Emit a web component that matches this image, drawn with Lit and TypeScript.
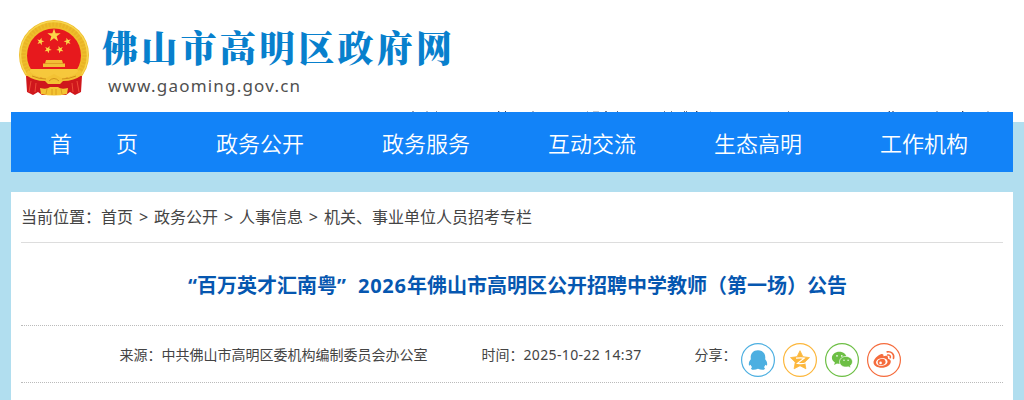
import { LitElement, html, css, svg } from "lit";
import { customElement } from "lit/decorators.js";

const star = (cx: number, cy: number, r: number, turn = 0, inner = 0.4) =>
  Array.from({ length: 10 }, (_, i) => {
    const a = ((i * 36 - 90 + turn) * Math.PI) / 180;
    const d = i % 2 ? r * inner : r;
    return `${(cx + d * Math.cos(a)).toFixed(2)},${(cy + d * Math.sin(a)).toFixed(2)}`;
  }).join(" ");

const NAV = ["首　　页", "政务公开", "政务服务", "互动交流", "生态高明", "工作机构"];

/* x, width, opacity of the glyph tops that peek out above the navigation bar */
const TICKS: [number, number, number][] = [
  [412, 2, 0.5], [426, 2, 0.35], [436, 1, 0.6], [498, 1, 0.9], [499, 1, 0.3], [505, 1, 1], [532, 2, 0.4],
  [587, 1, 0.4], [593, 6, 0.3], [605, 2, 0.7], [617, 1, 0.8], [664, 1, 0.7], [671, 1, 0.7],
  [684, 1, 0.8], [686, 1, 0.8], [696, 1, 1], [697, 1, 0.4], [710, 1, 0.3], [788, 1, 0.6],
  [888, 1, 0.3], [889, 1, 0.9], [892, 2, 0.6], [936, 2, 0.4], [962, 1, 1], [963, 1, 0.3], [987, 2, 0.3],
];

@customElement("site-emblem")
class SiteEmblem extends LitElement {
  static styles = css`:host { display: block; } svg { display: block; }`;
  render() {
    return html`<svg width="72" height="78" viewBox="0 0 72 78">
      <circle cx="36" cy="36" r="35" fill="#efbd2b"/>
      <circle cx="36" cy="36" r="31" fill="none" stroke="#d79a18" stroke-width="5" stroke-dasharray="2 1.6" opacity=".25"/>
      <circle cx="36" cy="36" r="33.5" fill="none" stroke="#f7d64e" stroke-width="1.400"/>
      <circle cx="36" cy="36.500" r="27" fill="#e7191d"/>
      <polygon points=${star(36, 16.5, 7)} fill="#fbd548"/>
      <polygon points=${star(22.5, 22.5, 3.9, 15)} fill="#fbd548"/>
      <polygon points=${star(49.5, 22.5, 3.9, -15)} fill="#fbd548"/>
      <polygon points=${star(30, 30.5, 3.8, 25)} fill="#fbd548"/>
      <polygon points=${star(42, 30.500, 3.8, -25)} fill="#fbd548"/>
      <path d="M28 41h16l1 3.500h2v3.500H25v-3.500h2z" fill="#f3bf36"/>
      <path d="M27 44.500h18" stroke="#d8891b" stroke-width=".7"/>
      <path d="M13 50h46l3 4-9 5H19l-9-5z" fill="#f6c83c"/>
      <path d="M8 57q14 0 22 4l6-3 6 3q8-4 22-4l-1 16-6 3-5-3-4 3H24l-4-3-5 3-6-3z" fill="#cf171c"/>
      <path d="M13 62l-2 11M18 64l-1 9M54 64l1 9M59 62l2 11" stroke="#ef4a38" stroke-width="1"/>
      <path d="M10 51q8 8 18 8l8-4 8 4q10 0 18-8l2 5q-8 6-19 6l-3 3H30l-3-3q-11 0-19-6z" fill="#f3c234"/>
      <path d="M31 62q5-5 10 0M14 57q7 3 14 3M58 57q-7 3-14 3" fill="none" stroke="#cd8a17" stroke-width=".9"/>
      <path d="M22 69q7 2 10-1h8q3 3 10 1l-1 6q-13 3-26 0z" fill="#f3c433"/>
      <path d="M29 70l-1 5M34 70v6M38 70v6M43 70l1 5" stroke="#d59619" stroke-width=".8"/>
    </svg>`;
  }
}

const qq = svg`<path fill="#4cafe1" d="M17 7.300c4.900 0 7.300 3.300 7.300 7.200l-.1 1.800c1.600 1.900 2.200 3.800 1.900 5.600-.3 1-1 .7-1.700-.2-.3 1-.8 1.800-1.500 2.500 1.400.5 1.500 2.300-.9 2.500-1.500.1-3.500-.2-5-.9-1.500.7-3.500 1-5 .9-2.400-.2-2.300-2-.9-2.500-.7-.7-1.200-1.500-1.500-2.500-.7.9-1.400 1.200-1.700.2-.3-1.800.3-3.700 1.900-5.600l-.1-1.800c0-3.900 2.400-7.200 7.300-7.200z"/>`;
const qzone = svg`<polygon points=${star(17, 17.7, 10, 0, 0.5)} fill="#fcb73c" stroke="#fcb73c" stroke-width=".8" stroke-linejoin="round"/><path d="M13 15.200q4.500-.6 8.200-.1l-6.700 5.200q4.500.6 8-.3" fill="none" stroke="#fff" stroke-width="1.200"/>`;
const wechat = svg`<path fill="#6dbf45" d="M14.300 8.700c4.100 0 7.400 2.700 7.400 6s-3.300 6-7.400 6q-1.200 0-2.300-.3l-2.900 1.500.8-2.500C8.200 18.400 6.900 16.800 6.900 14.700c0-3.300 3.300-6 7.400-6z"/><path fill="#6dbf45" stroke="#fff" stroke-width=".7" d="M21 13.400c3.600 0 6.500 2.400 6.500 5.400 0 1.700-.9 3-2.300 4l.6 2.200-2.600-1.200q-1 .3-2.200.3c-3.600 0-6.500-2.400-6.500-5.300s2.900-5.400 6.500-5.400z"/><g fill="#fff"><circle cx="12" cy="12.900" r=".8"/><circle cx="16.800" cy="12.900" r=".8"/><circle cx="19" cy="17.300" r=".7"/><circle cx="23.100" cy="17.300" r=".7"/></g>`;
const weibo = svg`<path fill="#f56b3c" d="M13.800 11.200c1.800-.7 3.100.1 2.600 2.100 2.300-.9 4.900-.9 4.600 1.700 0 .6.1.8.7 1 1.500.5 2.100 1.300 2.100 2.500 0 3.400-4.300 6.300-9.100 6.300-4.500 0-8.200-2.200-8.200-5.500 0-3.100 4.200-7 7.300-8.100z"/><ellipse cx="14.800" cy="19" rx="5.800" ry="3.900" fill="#fff" transform="rotate(-8 14.800 19)"/><ellipse cx="14.600" cy="19.100" rx="4" ry="3.100" fill="#f56b3c" transform="rotate(-15 14.600 19.100)"/><circle cx="13.600" cy="19.900" r="1.300" fill="#fff"/><g fill="none" stroke="#f56b3c" stroke-width="1.600" stroke-linecap="round"><path d="M20.200 8.900c4.200-.8 7.300 2.200 6.300 6.500"/><path d="M20.700 12c1.800-.3 3 .9 2.600 2.700"/></g>`;
const SHARE: [string, unknown][] = [["#4cafe1", qq], ["#fcb73c", qzone], ["#6dbf45", wechat], ["#f56b3c", weibo]];

@customElement("app-root")
class AppRoot extends LitElement {
  static styles = css`
    :host { display: block; height: 400px; overflow: hidden; color: #444;
      background: linear-gradient(#fff 122px, #b1deef 122px);
      font-family: "Noto Sans", "Noto Sans CJK SC", sans-serif; }
    * { box-sizing: border-box; }
    .wrap { width: 1002px; margin-left: 11px; }
    .head { display: flex; height: 110px; padding: 18px 0 0 7px; gap: 12px; }
    site-emblem { margin-top: 1px; }
    .name { height: 58px; font: 900 36px/58px "Noto Serif CJK SC", "Noto Sans CJK SC", sans-serif;
      letter-spacing: 3.25px; color: #0880cd; white-space: nowrap; }
    .url { margin: -2px 0 0 6px; font-size: 17px; line-height: 24px; letter-spacing: 1.2px; color: #505050; }
    .ticks { display: block; }
    .nav { display: flex; height: 60px; background: #1283f8; }
    .nav a { width: 166px; text-align: center; font: 350 22px/60px "Noto Sans CJK SC", sans-serif; color: #fff; white-space: pre; }
    .page { height: 220px; margin-top: 20px; padding: 0 10px; background: #fff; }
    .crumbs { height: 51px; line-height: 51px; font-size: 16px; border-bottom: 1px solid #ddd; word-spacing: 1.75px; white-space: nowrap; }
    .title { height: 83px; margin: 0; padding-left: 167px; border-bottom: 1px dotted #bbb; display: flex;
      font-size: 20px; line-height: 86px; font-weight: 700; color: #0657b0; white-space: nowrap; }
    .open { width: 9px; } .close { width: 21px; } .year { width: 49px; letter-spacing: .7px; }
    .meta { display: flex; height: 57px; padding-left: 98.5px; border-bottom: 1px dotted #bbb; font-size: 14px; line-height: 57px; white-space: nowrap; }
    .src { width: 362px; } .time { width: 213px; } .num { letter-spacing: .35px; } .share { width: 45px; }
    .icons { display: flex; gap: 6px; padding: 16px 0 0 .5px; }
    .icons svg { display: block; width: 36px; height: 36px; }
  `;
  render() {
    return html`
      <div class="wrap">
        <header class="head">
          <site-emblem></site-emblem>
          <div><div class="name">佛山市高明区政府网</div><div class="url">www.gaoming.gov.cn</div></div>
        </header>
        <svg class="ticks" width="1002" height="2" viewBox="11 110 1002 2">
          ${TICKS.map(([x, w, o]) => svg`<rect x=${x} y="111" width=${w} height="1" fill="#3c4660" opacity=${o}/>`)}
        </svg>
        <nav class="nav">${NAV.map((n) => html`<a>${n}</a>`)}</nav>
        <main class="page">
          <div class="crumbs">当前位置：首页 &gt; 政务公开 &gt; 人事信息 &gt; 机关、事业单位人员招考专栏</div>
          <h1 class="title"><span class="open">“</span><span>百万英才汇南粤</span><span class="close">”</span><span class="year">2026</span><span>年佛山市高明区公开招聘中学教师（第一场）公告</span></h1>
          <div class="meta">
            <span class="src">来源：中共佛山市高明区委机构编制委员会办公室</span>
            <span class="time">时间：<span class="num">2025-10-22 14:37</span></span>
            <span class="share">分享：</span>
            <div class="icons">${SHARE.map(([c, g]) => html`<svg viewBox="-1 -1 36 36"><circle cx="17" cy="17" r="16.4" fill="#fff" stroke=${c} stroke-width="1.2"/>${g}</svg>`)}</div>
          </div>
        </main>
      </div>`;
  }
}
